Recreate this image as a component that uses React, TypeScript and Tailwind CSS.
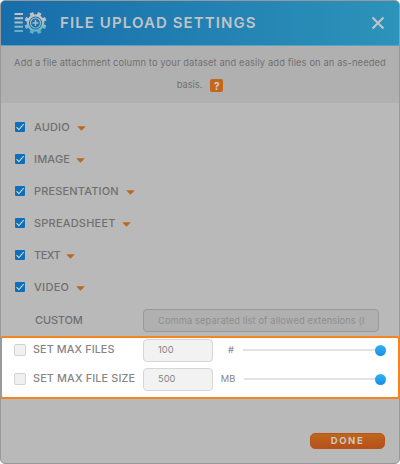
import { useState } from "react";

const fileTypes = [
  { name: "AUDIO", label: "w-[43px] tracking-[0.15px]" },
  { name: "IMAGE", label: "w-[42px] tracking-[0.15px]" },
  { name: "PRESENTATION", label: "w-[91.5px] tracking-[0.15px]" },
  { name: "SPREADSHEET", label: "w-[87.5px] tracking-[0.2px]" },
  { name: "TEXT", label: "w-[32px] tracking-[-0.5px]" },
  { name: "VIDEO", label: "w-[41.5px] tracking-[0.3px]" },
];

const limits = [
  { name: "SET MAX FILES", label: "tracking-[0.1px]", value: "100", unit: "#", unitPad: "pl-[7px]", track: "w-[137px]" },
  { name: "SET MAX FILE SIZE", label: "tracking-[0.16px]", value: "500", unit: "MB", unitPad: "pl-px", track: "w-[136px]" },
];

const toothAngles = [0, 45, 90, 135, 180, 225, 270, 315];

const GearIcon = () => (
  <svg className="shrink-0" width="34" height="24" viewBox="0 0 34 24" fill="none">
    <defs>
      <linearGradient id="gear" x1="0" y1="0" x2="0" y2="24" gradientUnits="userSpaceOnUse">
        <stop offset="0.35" stopColor="#bfc3c5" />
        <stop offset="0.85" stopColor="#5fb0c4" />
      </linearGradient>
      <mask id="gear-shape" maskUnits="userSpaceOnUse" x="0" y="0" width="34" height="24">
        <g stroke="#fff">
          <path
            d="M.5 3h8.5M.5 7.2h8.5M.5 11.5h8.2M.5 15.7h8.5M.5 20h8.5"
            strokeWidth="2"
          />
          <circle cx="21.5" cy="12" r="7.6" strokeWidth="2.2" />
          {toothAngles.map((angle) => (
            <path
              key={angle}
              d="M21.5 4V1"
              strokeWidth="3.8"
              transform={`rotate(${angle + 22.5} 21.5 12)`}
            />
          ))}
          <circle cx="21.5" cy="12" r="5" strokeWidth="1.1" />
          <path d="M21.5 9v6M18.5 12h6" strokeWidth="1.5" />
        </g>
      </mask>
    </defs>
    <rect width="34" height="24" fill="url(#gear)" mask="url(#gear-shape)" />
  </svg>
);

const CheckedBox = () => (
  <span className="flex h-[10px] w-[10px] items-center justify-center rounded-[1px] bg-[#0d6fb5]">
    <svg width="10" height="10" viewBox="0 0 10 10" fill="none">
      <path d="M1.5 5.2L3.9 7.6L8.6 2.2" stroke="#c3cdd3" strokeWidth="1.2" />
    </svg>
  </span>
);

export default function App() {
  const [checked, setChecked] = useState<string[]>([]);

  const toggle = (name: string) => {
    setChecked((prev) =>
      prev.includes(name) ? prev.filter((n) => n !== name) : [...prev, name]
    );
  };

  return (
    <div className="h-[464px] w-[400px] overflow-hidden bg-white font-[Inter,sans-serif] text-[#707070]">
      <div className="flex h-[464px] flex-col overflow-hidden rounded-[5px] border border-[#999] bg-[#b9b9b9]">
        <header className="flex h-[45px] shrink-0 items-center border-b border-[#5ba1c4] bg-linear-to-r from-[#186dab] to-[#2d93b9] pl-[13px] pr-[14px]">
          <GearIcon />
          <h1 className="ml-[12px] whitespace-nowrap text-[15px] font-semibold tracking-[1.1px] text-[#bfc3c6]">
            FILE UPLOAD SETTINGS
          </h1>
          <svg className="ml-auto" width="14" height="14" viewBox="0 0 14 14">
            <path d="M1.5 1.5l11 11M12.5 1.5l-11 11" stroke="#c0c5c7" strokeWidth="2.1" />
          </svg>
        </header>

        <div className="h-[57px] shrink-0 bg-[#b0b0b0] pt-[6px] text-center text-[9.3px] leading-[22px]">
          <p className="whitespace-nowrap tracking-[0.13px]">
            Add a file attachment column to your dataset and easily add files on an as-needed
          </p>
          <p className="flex items-center justify-center gap-[8px]">
            basis.
            <span className="mt-px flex h-[13px] w-[13px] items-center justify-center rounded-[2px] bg-[#c3681a] text-[10px] font-bold leading-none text-[#d5d0cb]">
              ?
            </span>
          </p>
        </div>

        <ul className="mt-[8px] shrink-0">
          {fileTypes.map((type) => (
            <li key={type.name} className="flex h-[32px] items-center pl-[14px]">
              <CheckedBox />
              <span className={`ml-[9px] whitespace-nowrap text-[11px] font-medium ${type.label}`}>
                {type.name}
              </span>
              <svg className="mt-[2px]" width="9" height="5" viewBox="0 0 9 5">
                <path d="M0.2 0.3h8.6L4.5 4.8z" fill="#bd671c" />
              </svg>
            </li>
          ))}
        </ul>

        <div className="mt-[6px] flex h-[23px] shrink-0 items-center pl-[34px]">
          <span className="w-[108px] text-[11px] font-medium tracking-[-0.15px]">CUSTOM</span>
          <div className="flex h-[23px] w-[236px] items-center rounded-[4px] border-[1.5px] border-[#999] bg-[#b0b0b0] pl-[14px]">
            <span className="whitespace-nowrap text-[9.3px] tracking-[0.1px] text-[#8e8e8e]">
              Comma separated list of allowed extensions (I
            </span>
          </div>
        </div>

        <div className="-mx-px mt-[4px] flex h-[63px] shrink-0 flex-col gap-px rounded-[3px] border-2 border-[#f5831f] bg-white text-[#858585]">
          {limits.map((limit) => (
            <div
              key={limit.name}
              className="-mt-[2px] mb-[2px] flex h-[28px] shrink-0 items-center pl-[12px] pr-[12px]"
            >
              <button
                onClick={() => toggle(limit.name)}
                className={`-mt-px h-[12px] w-[12px] shrink-0 rounded-[2px] border border-[#d3d3d3] ${
                  checked.includes(limit.name) ? "bg-[#1a9be8]" : "bg-[#f0f0f0]"
                }`}
              />
              <span
                className={`ml-[7px] w-[108px] shrink-0 whitespace-nowrap text-[10.8px] font-medium ${limit.label}`}
              >
                {limit.name}
              </span>
              <span className="ml-[2px] flex h-[23px] w-[70px] shrink-0 items-center rounded-[4px] border-[1.5px] border-[#d6d6d6] bg-[#f2f2f2] pl-[14px] text-[9.3px]">
                {limit.value}
              </span>
              <span className={`w-[29px] shrink-0 text-center text-[9.3px] ${limit.unitPad}`}>
                {limit.unit}
              </span>
              <span className="flex flex-1 items-center justify-end">
                <span className={`h-[2px] shrink-0 bg-[#e3e3e3] ${limit.track}`} />
                <span className="-ml-[5px] h-[11px] w-[11px] shrink-0 rounded-full bg-linear-to-b from-[#31b3f4] to-[#168ee5]" />
              </span>
            </div>
          ))}
        </div>

        <button className="ml-auto mr-[14px] mt-[34px] flex h-[16px] w-[75px] shrink-0 items-center justify-center rounded-[5px] border border-[#b95418] bg-linear-to-b from-[#bd671c] to-[#b6501b] text-[9.5px] font-bold tracking-[1.6px] text-[#cdc6c0]">
          DONE
        </button>
      </div>
    </div>
  );
}
